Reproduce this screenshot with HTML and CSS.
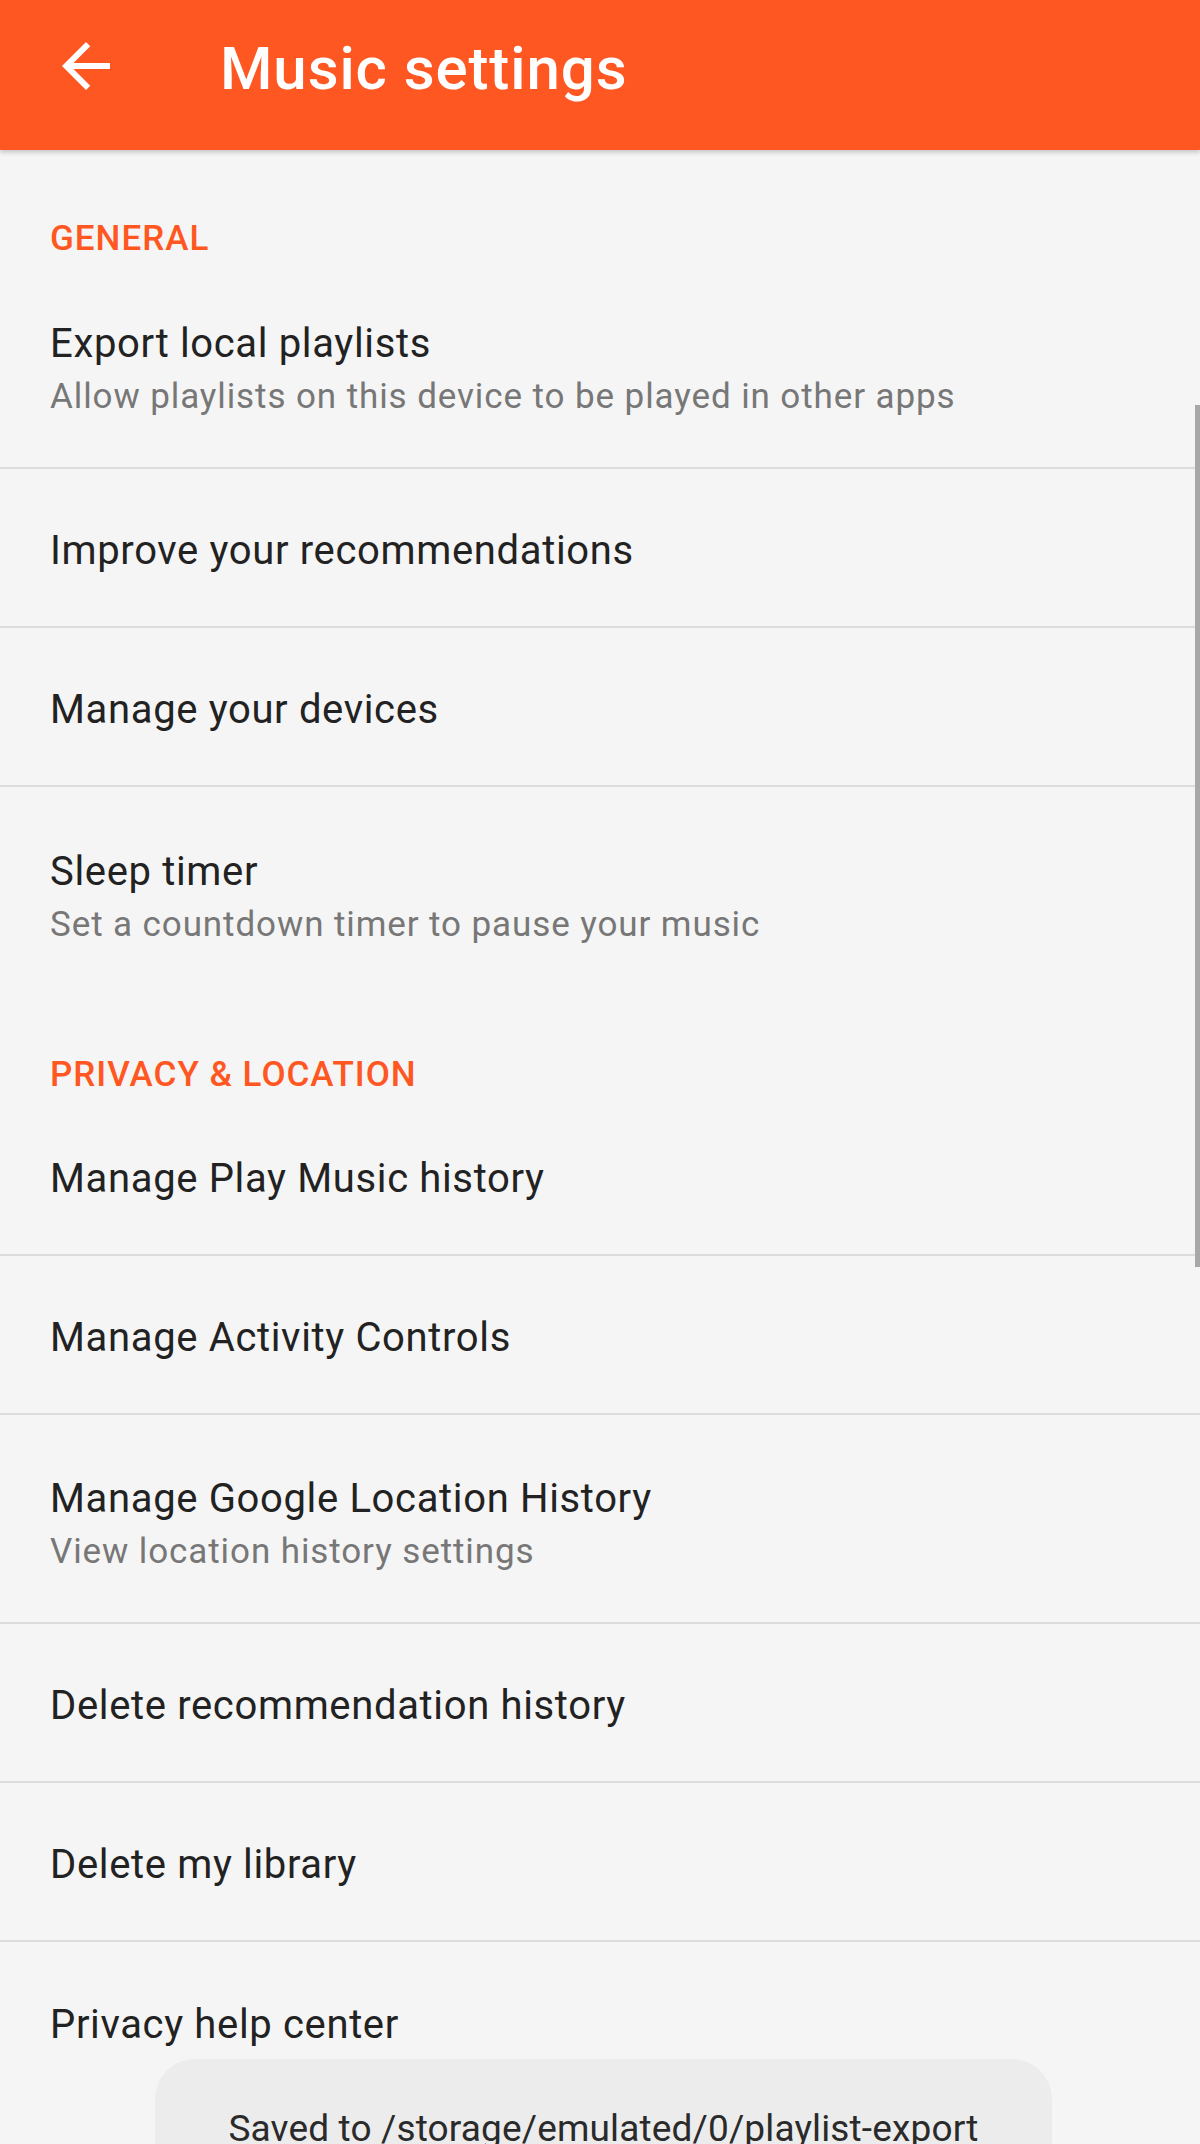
FILE: index.html
```html
<!DOCTYPE html>
<html lang="en">
<head>
  <meta charset="UTF-8">
  <meta name="viewport" content="width=device-width, initial-scale=1">
  <title>Music settings</title>
  <link rel="stylesheet" href="styles.css">
</head>
<body>
  <!-- toolbar -->
  <header class="toolbar">
    <svg class="back" viewBox="0 0 24 24" width="72" height="72">
      <path d="M20 11H7.83l5.59-5.59L12 4l-8 8 8 8 1.41-1.41L7.83 13H20v-2z" fill="#fff"/>
    </svg>
    <h1>Music settings</h1>
  </header>

  <main class="prefs">
    <div class="category first">General</div>
    <div class="pref two">
      <div class="title">Export local playlists</div>
      <div class="summary">Allow playlists on this device to be played in other apps</div>
    </div>
    <div class="pref"><div class="title">Improve your recommendations</div></div>
    <div class="pref"><div class="title">Manage your devices</div></div>
    <div class="pref two last">
      <div class="title">Sleep timer</div>
      <div class="summary">Set a countdown timer to pause your music</div>
    </div>

    <div class="category">Privacy &amp; location</div>
    <div class="pref"><div class="title">Manage Play Music history</div></div>
    <div class="pref"><div class="title">Manage Activity Controls</div></div>
    <div class="pref two">
      <div class="title">Manage Google Location History</div>
      <div class="summary">View location history settings</div>
    </div>
    <div class="pref"><div class="title">Delete recommendation history</div></div>
    <div class="pref"><div class="title">Delete my library</div></div>
    <div class="pref last"><div class="title">Privacy help center</div></div>

    <div class="scrollbar"></div>
  </main>

  <div class="toast">Saved to /storage/emulated/0/playlist-export</div>
</body>
</html>
```

FILE: styles.css
```css
body {
  margin: 0;
  background: #f5f5f5;
  font-family: Roboto, "Liberation Sans", sans-serif;
  overflow: hidden;
}

.toolbar {
  height: 150px;
  box-sizing: border-box;
  padding: 0 0 18px 50px;
  display: flex;
  align-items: center;
  background: #ff5722;
  color: #fff;
  box-shadow: 0 2px 5px rgba(0, 0, 0, 0.22);
  position: relative;
  z-index: 2;
}
.toolbar .back {
  flex: none;
  margin-right: 98px;
}
.toolbar h1 {
  margin: 0;
  padding-top: 5px;
  font-size: 60px;
  font-weight: 500;
  letter-spacing: 0.9px;
  line-height: 72px;
}

.prefs {
  position: relative;
}

.category {
  height: 101px;
  box-sizing: border-box;
  padding: 59px 0 0 50px;
  font-size: 35px;
  line-height: 40px;
  font-weight: 500;
  letter-spacing: 1px;
  text-transform: uppercase;
  color: #ff5722;
}
.category.first {
  height: 110px;
  padding-top: 69px;
}

.pref {
  height: 159px;
  box-sizing: border-box;
  padding: 6px 0 0 50px;
  display: flex;
  flex-direction: column;
  justify-content: center;
  border-bottom: 2px solid #dcdcdc;
}
.pref.two {
  height: 209px;
}
.pref.last {
  border-bottom: none;
}
.pref .title {
  font-size: 40px;
  line-height: 60px;
  letter-spacing: 0.65px;
  color: #222;
}
.pref .summary {
  font-size: 35px;
  line-height: 46px;
  letter-spacing: 0.9px;
  color: #777;
}

.scrollbar {
  position: absolute;
  right: 0;
  top: 255px;
  width: 5px;
  height: 862px;
  background: #a8a8a8;
}

.toast {
  position: fixed;
  left: 155px;
  right: 148px;
  top: 2059px;
  height: 140px;
  box-sizing: border-box;
  padding-top: 46px;
  border-radius: 40px;
  background: #ececec;
  text-align: center;
  font-size: 37px;
  line-height: 48px;
  letter-spacing: 0.15px;
  color: #2a2a2a;
}
```
